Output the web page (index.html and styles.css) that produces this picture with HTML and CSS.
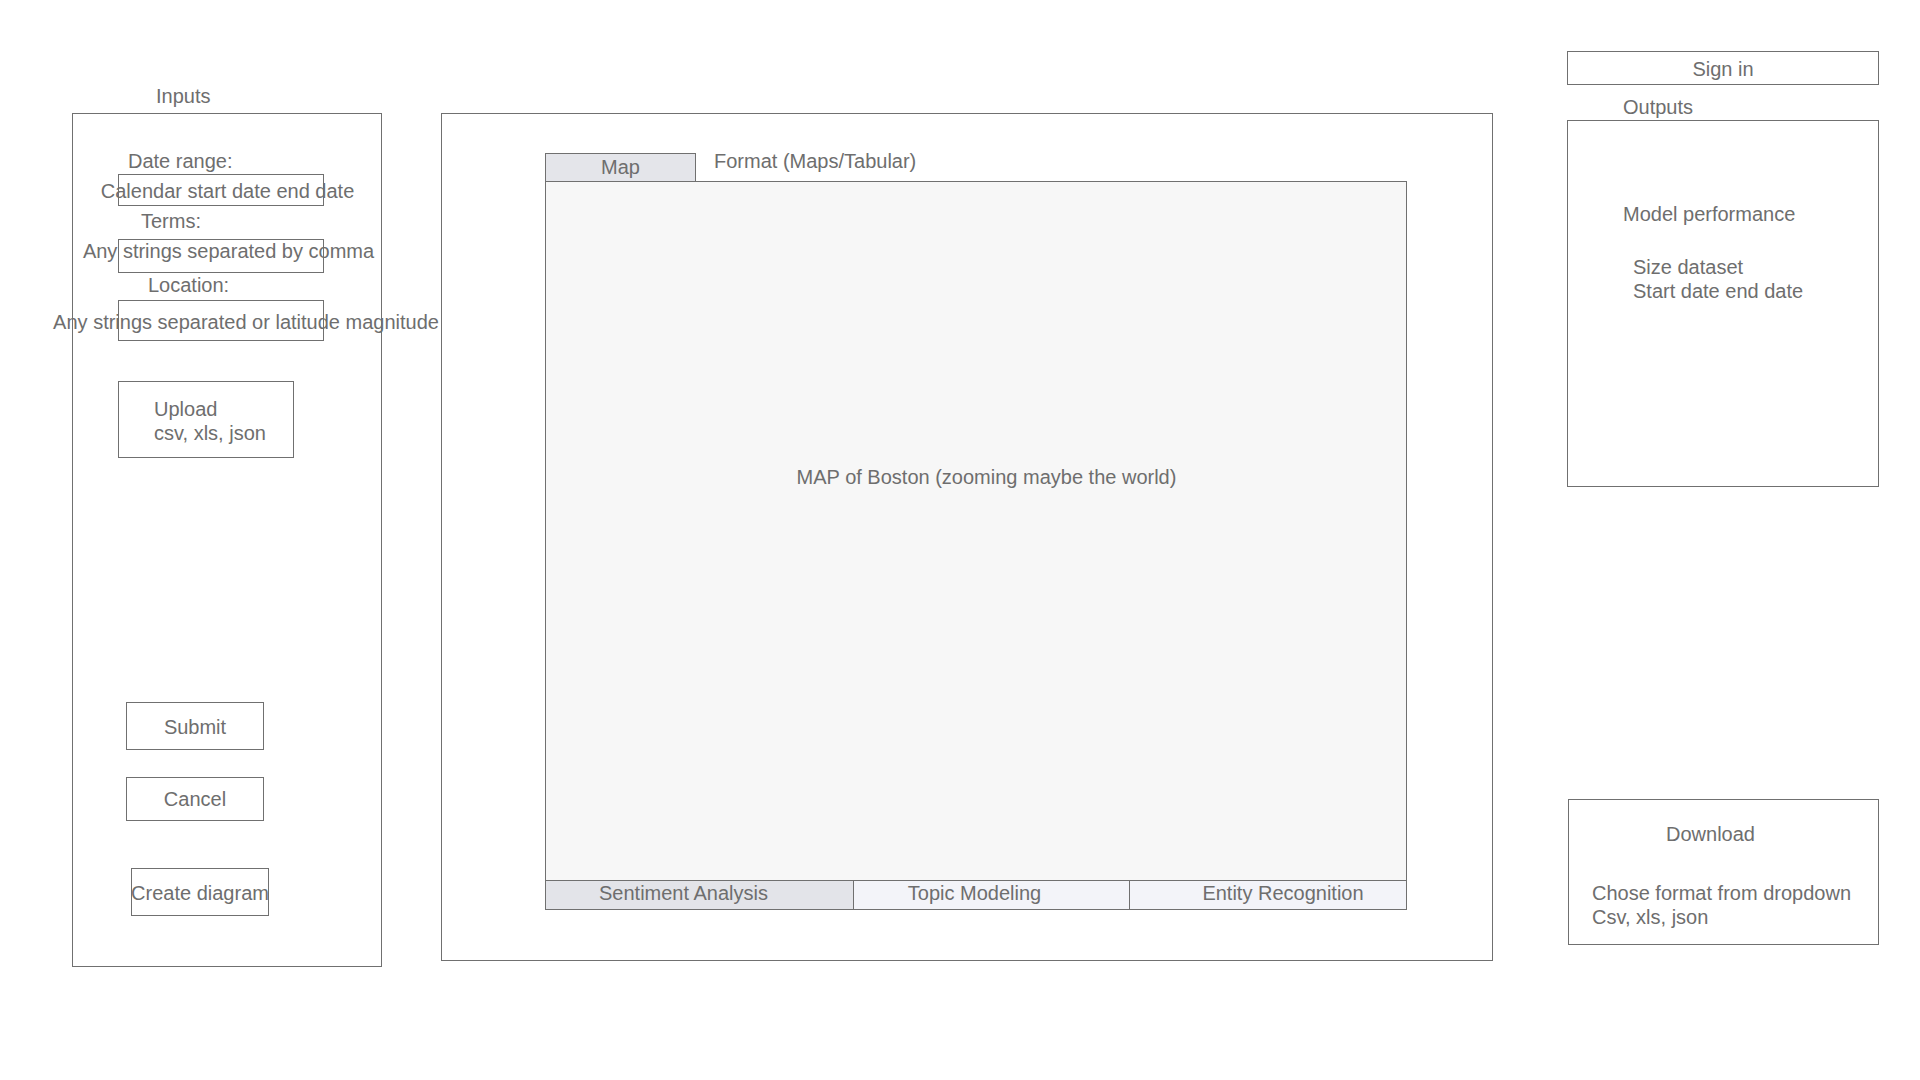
FILE: index.html
```html
<!DOCTYPE html>
<html lang="en">
<head>
<meta charset="utf-8">
<title>Wireframe</title>
<link rel="stylesheet" href="styles.css">
</head>
<body>
<div class="page">
  <section class="col-inputs">
    <div class="inputs-title">Inputs</div>
    <div class="panel inputs-panel">
      <div class="label lbl-date">Date range:</div>
      <div class="field f-date"><span class="field-text t-date">Calendar start date end date</span></div>
      <div class="label lbl-terms">Terms:</div>
      <div class="field f-terms"><span class="field-text t-terms">Any strings separated by comma</span></div>
      <div class="label lbl-loc">Location:</div>
      <div class="field f-loc"><span class="field-text t-loc">Any strings separated or latitude magnitude</span></div>
      <div class="upload">
        <div>Upload</div>
        <div>csv, xls, json</div>
      </div>
      <div class="btn btn-submit">Submit</div>
      <div class="btn btn-cancel">Cancel</div>
      <div class="btn btn-create">Create diagram</div>
    </div>
  </section>

  <main class="canvas">
    <div class="viewer-head">
      <div class="view-tab">Map</div>
      <div class="format-note">Format (Maps/Tabular)</div>
    </div>
    <div class="map-area">
      <span class="map-text">MAP of Boston (zooming maybe the world)</span>
    </div>
    <div class="analysis-tabs">
      <div class="a-tab a-sentiment">Sentiment Analysis</div>
      <div class="a-tab a-topic">Topic Modeling</div>
      <div class="a-tab a-entity">Entity Recognition</div>
    </div>
  </main>

  <aside class="col-outputs">
    <div class="signin">Sign in</div>
    <div class="outputs-title">Outputs</div>
    <div class="panel outputs-panel">
      <div class="perf-title">Model performance</div>
      <div class="perf-stats">
        <div>Size dataset</div>
        <div>Start date end date</div>
      </div>
    </div>
    <div class="panel download">
      <div class="download-title">Download</div>
      <div class="download-info">
        <div>Chose format from dropdown</div>
        <div>Csv, xls, json</div>
      </div>
    </div>
  </aside>
</div>
</body>
</html>
```

FILE: styles.css
```css
* { box-sizing: border-box; }

html, body {
  margin: 0;
  padding: 0;
  background: #ffffff;
}

body {
  font-family: "Liberation Sans", Arial, Helvetica, sans-serif;
  font-size: 20px;
  line-height: 24px;
  color: #6e6e6e;
  width: 1920px;
  height: 1080px;
  overflow: hidden;
}

.page {
  display: flex;
  align-items: flex-start;
  padding-left: 72px;
}

.panel {
  border: 1px solid #707070;
}

/* ---------- Inputs column ---------- */
.col-inputs {
  width: 310px;
  margin-top: 84px;
  display: flex;
  flex-direction: column;
}

.inputs-title {
  margin-left: 84px;
}

.inputs-panel {
  margin-top: 5px;
  height: 854px;
  display: flex;
  flex-direction: column;
  align-items: flex-start;
}

.field {
  border: 1px solid #707070;
  width: 206px;
  display: flex;
  align-items: center;
  justify-content: center;
  margin-left: 45px;
}

.field-text {
  white-space: nowrap;
  flex-shrink: 0;
}

.lbl-date { margin: 35px 0 0 55px; }
.f-date { margin-top: 1px; height: 32px; }
.t-date { margin-left: 13px; margin-top: 2px; }

.lbl-terms { margin: 3px 0 0 68px; }
.f-terms { margin-top: 6px; height: 34px; }
.t-terms { margin-left: 15px; margin-bottom: 10px; }

.lbl-loc { margin: 0 0 0 75px; }
.f-loc { margin-top: 3px; height: 41px; }
.t-loc { margin-left: 50px; margin-top: 3px; }

.upload {
  margin: 40px 0 0 45px;
  width: 176px;
  height: 77px;
  border: 1px solid #707070;
  padding: 15px 0 0 35px;
}

.btn {
  border: 1px solid #707070;
  width: 138px;
  display: flex;
  align-items: center;
  justify-content: center;
  white-space: nowrap;
  padding-top: 2px;
}

.btn-submit { margin: 244px 0 0 53px; height: 48px; }
.btn-cancel { margin: 27px 0 0 53px; height: 44px; padding-top: 0; }
.btn-create { margin: 47px 0 0 58px; height: 48px; }

/* ---------- Canvas ---------- */
.canvas {
  margin-left: 59px;
  margin-top: 113px;
  width: 1052px;
  height: 848px;
  border: 1px solid #707070;
  padding: 39px 0 0 103px;
  display: flex;
  flex-direction: column;
  align-items: flex-start;
}

.viewer-head {
  display: flex;
  align-items: flex-start;
}

.view-tab {
  width: 151px;
  height: 28px;
  border: 1px solid #707070;
  border-bottom: none;
  background: #e4e5ea;
  text-align: center;
  line-height: 26px;
}

.format-note {
  margin-left: 18px;
  margin-top: -4px;
  white-space: nowrap;
}

.map-area {
  width: 862px;
  height: 699px;
  border: 1px solid #707070;
  border-bottom: none;
  background: #f7f7f7;
  display: flex;
  justify-content: center;
  align-items: flex-start;
  padding: 283px 0 0 21px;
}

.map-text {
  white-space: nowrap;
}

.analysis-tabs {
  width: 862px;
  height: 30px;
  border: 1px solid #707070;
  display: grid;
  grid-template-columns: 307px 276px 1fr;
}

.a-tab {
  line-height: 25px;
  text-align: center;
  white-space: nowrap;
  background: #f3f4f9;
}

.a-sentiment { background: #e3e4e9; padding-right: 32px; }
.a-topic { border-left: 1px solid #707070; padding-right: 34px; }
.a-entity { border-left: 1px solid #707070; padding-left: 30px; }

/* ---------- Outputs column ---------- */
.col-outputs {
  margin-left: 74px;
  margin-top: 51px;
  width: 312px;
  display: flex;
  flex-direction: column;
}

.signin {
  height: 34px;
  border: 1px solid #707070;
  text-align: center;
  line-height: 34px;
}

.outputs-title {
  margin: 10px 0 0 56px;
}

.outputs-panel {
  margin-top: 1px;
  height: 367px;
  padding: 81px 0 0 55px;
}

.perf-stats {
  margin: 29px 0 0 10px;
}

.download {
  margin: 312px 0 0 1px;
  width: 311px;
  height: 146px;
  padding: 22px 0 0 23px;
}

.download-title {
  margin-left: 74px;
}

.download-info {
  margin-top: 35px;
}
```
